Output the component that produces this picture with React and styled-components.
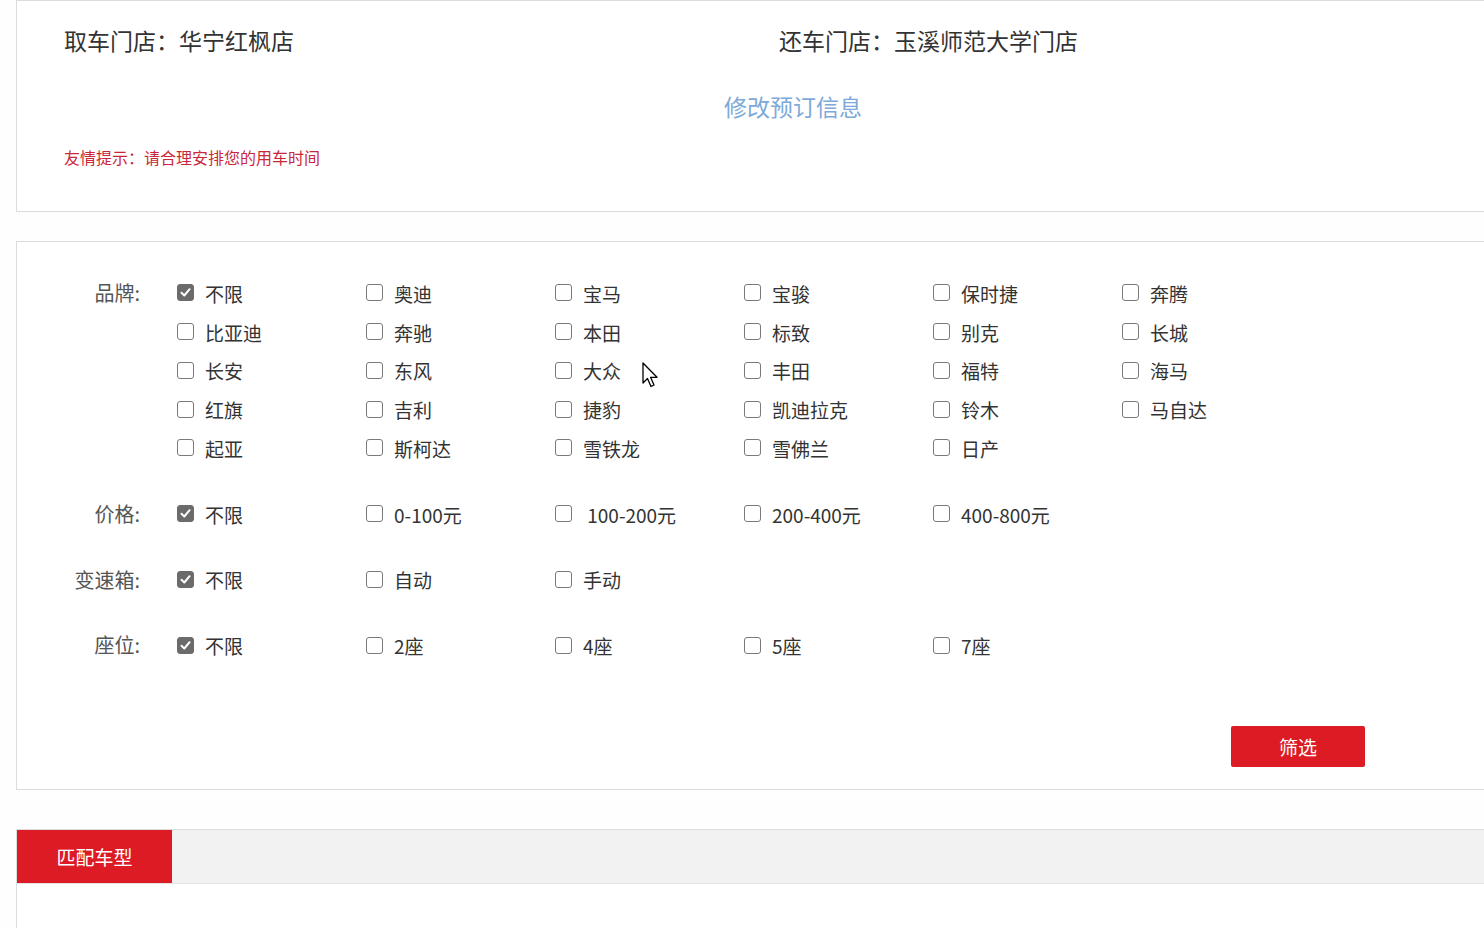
import React from 'react';
import styled, { createGlobalStyle } from 'styled-components';

const GlobalStyle = createGlobalStyle`
  html, body {
    margin: 0;
    padding: 0;
    background: #fefefe;
    overflow: hidden;
  }
  body {
    font-family: "Noto Sans CJK SC", "Noto Sans", sans-serif;
    color: #333;
  }
`;

const Page = styled.div`
  position: relative;
  width: 1484px;
  height: 928px;
  overflow: hidden;
  padding-left: 16px;
  box-sizing: border-box;
`;

const Panel = styled.div`
  width: 1554px;
  box-sizing: border-box;
  border: 1px solid #dcdcdc;
  background: #fff;
`;

const InfoPanel = styled(Panel)`
  height: 212px;
  margin-bottom: 29px;
  padding: 24px 0 0 47px;
`;

const StoreRow = styled.div`
  display: flex;
  font-size: 23px;
  line-height: 30px;
  color: #333;
`;

const Store = styled.span`
  width: ${p => p.$w || 'auto'};
`;

const EditLink = styled.div`
  margin: 36px 0 0 -47px;
  text-align: center;
  font-size: 23px;
  line-height: 30px;
  color: #7ea9d9;
  cursor: pointer;
`;

const Tip = styled.div`
  margin-top: 26px;
  font-size: 16px;
  line-height: 20px;
  color: #c9283a;
`;

const FilterPanel = styled(Panel)`
  height: 549px;
  padding-top: 32px;
`;

const Group = styled.div`
  display: flex;
  margin-bottom: 27px;
`;

const Label = styled.div`
  width: 123px;
  text-align: right;
  font-size: 20px;
  line-height: 38.75px;
  color: #555;
  margin-right: 37px;
`;

const Options = styled.div`
  display: grid;
  grid-template-columns: repeat(6, 189px);
  grid-auto-rows: 38.75px;
`;

const Option = styled.label`
  display: flex;
  align-items: center;
  font-size: 19px;
  color: #333;
  white-space: pre;
  cursor: pointer;
`;

const Box = styled.span`
  width: 17px;
  height: 17px;
  box-sizing: border-box;
  border-radius: 3px;
  margin: -1px 11px 0 0;
  display: flex;
  align-items: center;
  justify-content: center;
  border: 1px solid ${p => (p.$on ? '#6b6b6b' : '#7a7a7a')};
  background: ${p => (p.$on ? '#6b6b6b' : '#fff')};
`;

const BtnRow = styled.div`
  display: flex;
  justify-content: flex-end;
  width: 1348px;
  margin-top: 61px;
`;

const FilterBtn = styled.button`
  width: 134px;
  height: 41px;
  border: none;
  border-radius: 2px;
  background: #dc1b24;
  color: #fff;
  font-family: inherit;
  font-size: 19px;
  cursor: pointer;
`;

const ResultPanel = styled.div`
  width: 1554px;
  height: 200px;
  margin-top: 39px;
  border-left: 1px solid #dcdcdc;
  border-top: 1px solid #dcdcdc;
  background: #fff;
`;

const TabBar = styled.div`
  display: flex;
  height: 53px;
  background: #f2f2f2;
  border-bottom: 1px solid #e2e2e2;
`;

const Tab = styled.div`
  width: 155px;
  display: flex;
  align-items: center;
  justify-content: center;
  background: #dc1b24;
  color: #fff;
  font-size: 19px;
`;

const Cursor = styled.svg`
  position: absolute;
  left: 642px;
  top: 362px;
`;

const Check = () => (
  <svg width="13" height="13" viewBox="0 0 13 13">
    <path d="M2.5 6.8 L5.3 9.5 L10.6 3.2" fill="none" stroke="#fff" strokeWidth="2" strokeLinecap="round" strokeLinejoin="round" />
  </svg>
);

const groups = [
  {
    label: '品牌:',
    items: [
      '不限', '奥迪', '宝马', '宝骏', '保时捷', '奔腾',
      '比亚迪', '奔驰', '本田', '标致', '别克', '长城',
      '长安', '东风', '大众', '丰田', '福特', '海马',
      '红旗', '吉利', '捷豹', '凯迪拉克', '铃木', '马自达',
      '起亚', '斯柯达', '雪铁龙', '雪佛兰', '日产',
    ],
  },
  { label: '价格:', items: ['不限', '0-100元', ' 100-200元', '200-400元', '400-800元'] },
  { label: '变速箱:', items: ['不限', '自动', '手动'] },
  { label: '座位:', items: ['不限', '2座', '4座', '5座', '7座'] },
];

const App = () => (
  <Page>
    <GlobalStyle />
    <InfoPanel>
      <StoreRow>
        <Store $w="715px">取车门店：华宁红枫店</Store>
        <Store>还车门店：玉溪师范大学门店</Store>
      </StoreRow>
      <EditLink>修改预订信息</EditLink>
      <Tip>友情提示：请合理安排您的用车时间</Tip>
    </InfoPanel>

    <FilterPanel>
      {groups.map(g => (
        <Group key={g.label}>
          <Label>{g.label}</Label>
          <Options>
            {g.items.map((it, i) => (
              <Option key={it}>
                <Box $on={i === 0}>{i === 0 && <Check />}</Box>
                {it}
              </Option>
            ))}
          </Options>
        </Group>
      ))}
      <BtnRow>
        <FilterBtn>筛选</FilterBtn>
      </BtnRow>
    </FilterPanel>

    <ResultPanel>
      <TabBar>
        <Tab>匹配车型</Tab>
      </TabBar>
    </ResultPanel>

    <Cursor width="18" height="28" viewBox="0 0 18 28">
      <path d="M1 1 L1 21 L5.5 16.5 L9 24.5 L12 23 L8.6 15.3 L15 15.3 Z" fill="#fff" stroke="#000" strokeWidth="1.3" strokeLinejoin="round" />
    </Cursor>
  </Page>
);

export default App;
